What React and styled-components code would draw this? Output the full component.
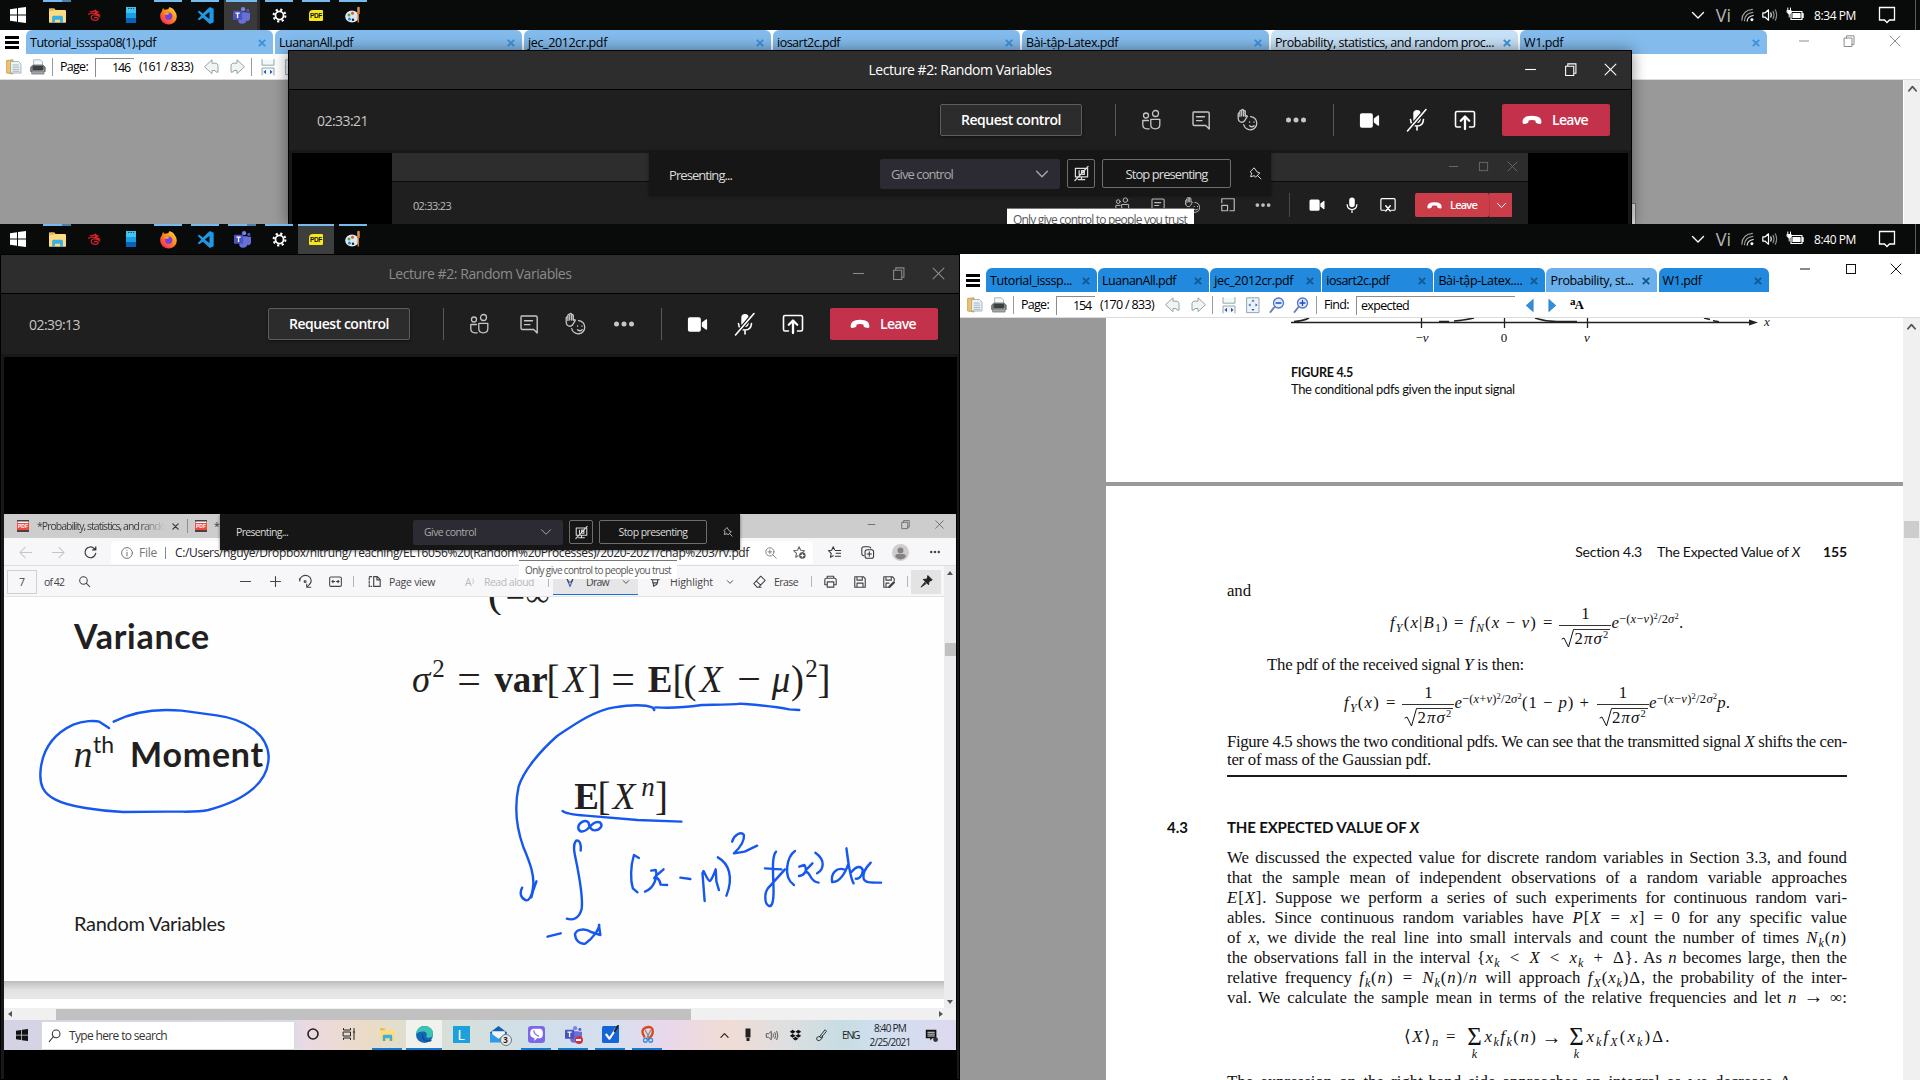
import React, { useLayoutEffect, useRef } from "react";
import styled, { createGlobalStyle, css } from "styled-components";

const ui = '"Open Sans", "Noto Sans", sans-serif';
const serif = '"Liberation Serif", "DejaVu Serif", serif';
const humanist = 'Lato, "Open Sans", sans-serif';

const Global = createGlobalStyle`
  html, body { margin: 0; padding: 0; background: #000; }
  * { box-sizing: border-box; }
`;

/* ---------- text that is spaced to a known width ---------- */

const Tracked = styled.span`
  display: inline-block;
  flex: none;
  white-space: nowrap;
`;

function Fit({ w, words, children, ...rest }) {
  const ref = useRef(null);
  useLayoutEffect(() => {
    const el = ref.current;
    const text = el.textContent;
    const prop = words ? "wordSpacing" : "letterSpacing";
    const n = words ? text.split(" ").length - 1 : text.length;
    el.style[prop] = "0px";
    el.style[prop] = (w - el.getBoundingClientRect().width) / n + "px";
  }, [w, words]);
  return (
    <Tracked ref={ref} {...rest}>
      {children}
    </Tracked>
  );
}

/* ---------- shared layout ---------- */

const Screen = styled.main`
  width: 1920px;
  height: 1080px;
  overflow: hidden;
  display: flex;
  flex-direction: column;
  background: #000;
  font-family: ${ui};
`;

const Desktop = styled.section`
  position: relative;
  flex: none;
  height: ${(p) => p.$h}px;
  display: flex;
  flex-direction: column;
  overflow: hidden;
`;

const Item = styled.div`
  flex: none;
  display: flex;
  align-items: center;
  justify-content: ${(p) => (p.$left ? "flex-start" : "center")};
  margin-left: ${(p) => p.$ml || 0}px;
  width: ${(p) => (p.$w ? p.$w + "px" : "auto")};
  padding-top: ${(p) => p.$pt || 0}px;
  white-space: nowrap;
`;

const Svg = styled.svg`
  display: block;
  flex: none;
  fill: none;
  stroke: currentColor;
  stroke-width: ${(p) => p.$sw || 1.2};
  stroke-linecap: round;
  stroke-linejoin: round;
  overflow: visible;
`;

function Glyph({ s = 16, vb = 16, sw, children, ...rest }) {
  return (
    <Svg width={s} height={s} viewBox={`0 0 ${vb} ${vb}`} $sw={sw} {...rest}>
      {children}
    </Svg>
  );
}

/* ---------- dark taskbar ---------- */

const Taskbar = styled.header`
  flex: none;
  height: 30px;
  display: flex;
  align-items: stretch;
  background: #090a0a;
  color: #fff;
`;

const TaskButton = styled.div`
  width: 36px;
  margin-right: 1px;
  display: flex;
  flex-direction: column;
  align-items: center;
  background: ${(p) => (p.$on ? (p.$split ? "#3a3a3a" : "#3d3f3f") : "transparent")};
  border-right: ${(p) => (p.$on && p.$split ? "3px solid #2a2a2a" : "0")};
  padding-left: ${(p) => (p.$on && p.$split ? "2px" : "0")};
`;

const TaskMark = styled.div`
  align-self: ${(p) => (p.$wide ? "stretch" : "center")};
  width: ${(p) => (p.$wide ? "auto" : "28px")};
  height: 2px;
  background: ${(p) =>
    !p.$run ? "transparent" : p.$multi ? "linear-gradient(90deg,#76b9ed 19px,#4f7fa8 19px)" : "#76b9ed"};
`;

const TaskIcon = styled.div`
  flex: 1;
  display: flex;
  align-items: center;
  padding-bottom: 2px;
`;

const StartSlot = styled.div`
  width: 39px;
  padding-left: 10px;
  display: flex;
  align-items: center;
`;

const Tray = styled.div`
  margin-left: auto;
  display: flex;
  align-items: center;
  font-size: 12px;
`;

const PeekLine = styled.div`
  width: 1px;
  height: 30px;
  margin: 0 4px 0 20px;
  background: #5a5a5a;
`;

const ViMark = styled.span`
  font-size: 18px;
  line-height: 20px;
  color: #b4b4b4;
`;

const WinLogo = ({ c = "#fff", s = 16 }) => (
  <Glyph s={s}>
    <path d="M0 2.3 7 1.3V7.5H0zM8 1.1 16 0v7.5H8zM0 8.5h7v6.2L0 13.7zM8 8.5h8V16l-8-1.1z" fill={c} stroke="none" />
  </Glyph>
);
const FolderIcon = ({ s = 17 }) => (
  <Glyph s={s}>
    <path d="M0 2.2q0-.9.9-.9h4l1.3 1.6H15q1 0 1 1V14q0 .8-1 .8H1q-1 0-1-.8z" fill="#fbdc82" stroke="none" />
    <path d="M0 1.5h5v2H0z" fill="#eab54a" stroke="none" />
    <path d="M3 15V9.6q0-1.3 1.3-1.3h7.4Q13 8.300 13 9.600V15h-2.600v-3H5.600v3z" fill="#39afe2" stroke="none" />
  </Glyph>
);
const DragonIcon = () => (
  <Glyph s={13} sw={1.5} color="#d8232a">
    <path d="M2.500 3q3.500 1.500 6.500-1.500.5 1.500 4 2.500M.5 6.500Q6 3.500 14.500 7.500M12 8Q5 6 4 9.500q-.5 4.500 4 4.500t4.500-2q0-1.800-2.500-1.800T7.500 11.500M12.500 8l2 2" />
    <path d="M9 2.500l2.500 2.500L9.500 6z" fill="#d8232a" />
  </Glyph>
);
const PhoneIcon = () => (
  <Glyph s={16}>
    <path d="M3 0h10v6H3z" fill="#42c3f2" stroke="none" />
    <path d="M3 6h10v5H3z" fill="#189fe2" stroke="none" />
    <path d="M3 11h10v5H3z" fill="#0a61b8" stroke="none" />
    <path d="M5.500 1.500h.5M8 1.500h.5M10.500 1.500h.3" stroke="#0b4a85" strokeWidth="1" />
  </Glyph>
);
const FirefoxIcon = () => (
  <Glyph s={17}>
    <defs>
      <linearGradient id="ff" x1="1" y1="0" x2="0.2" y2="1">
        <stop offset="0" stopColor="#ffe23c" />
        <stop offset=".5" stopColor="#ff8a1e" />
        <stop offset="1" stopColor="#f5235d" />
      </linearGradient>
    </defs>
    <path d="M2 3.500 2.800 1l1.700 1.800Q6 2 7.500 2.300L9 0q4 1.500 5 4 2 2.500 1.800 5.500A7.800 7.300 0 0 1 .2 9Q0 6 2 3.500z" fill="url(#ff)" stroke="none" />
    <circle cx="8.200" cy="8.600" r="3.400" fill="#7a3fd6" stroke="none" />
    <path d="M4 6.500q2-1.800 4.800-.6-.6 1.400-2.300 1.400z" fill="#ffb02e" stroke="none" />
  </Glyph>
);
const CodeIcon = () => (
  <Glyph s={17}>
    <path d="M12 0 5.500 6 2.200 3.600.6 4.400 4 8 .6 11.600l1.600.8L5.500 10 12 16l3.700-1.700V1.700zM11.700 4.800v6.400L7.400 8z" fill="#2196e3" fillRule="evenodd" stroke="none" />
  </Glyph>
);
const TeamsIcon = ({ s = 17 }) => (
  <Glyph s={s}>
    <circle cx="9.500" cy="2" r="2" fill="#7b83eb" stroke="none" />
    <circle cx="14" cy="3.200" r="1.400" fill="#5059c9" stroke="none" />
    <path d="M12 5.500h4V11q-.5 2.500-3 2.500zM6 5h7v6.500q-.6 4.300-4.500 4.300T5 12z" fill="#6870d8" stroke="none" />
    <rect x="0" y="3.500" width="8.600" height="8.600" rx=".8" fill="#4b53bc" stroke="none" />
    <path d="M2.300 5.800h4M4.300 5.800v4.500" stroke="#fff" strokeWidth="1.200" strokeLinecap="butt" />
  </Glyph>
);
const GearIcon = () => (
  <Glyph s={15} color="#fff">
    <circle cx="8" cy="8" r="4.300" strokeWidth="1.900" />
    <circle cx="8" cy="8" r="6.300" strokeWidth="2.200" strokeDasharray="2.300 2.650" strokeLinecap="butt" />
  </Glyph>
);
const PdfBox = styled.span`
  width: 14px;
  height: 11px;
  border-radius: 4px 1px 1px 1px;
  background: #f6e61a;
  color: #111;
  font: bold 6.5px/11px "Liberation Sans", Arial, sans-serif;
  text-align: center;
  letter-spacing: -0.3px;
`;
const PaintIcon = () => (
  <Glyph s={16}>
    <ellipse cx="7" cy="9.500" rx="6.800" ry="6" fill="#d7e8f3" stroke="none" />
    <circle cx="4" cy="8" r="1.500" fill="#58a83b" stroke="none" />
    <circle cx="7.500" cy="6.300" r="1.500" fill="#e5532f" stroke="none" />
    <circle cx="4.500" cy="12" r="1.500" fill="#2c86d8" stroke="none" />
    <circle cx="8" cy="12.800" r="1.200" fill="#1b1b1b" stroke="none" />
    <path d="M13.500 1v5" stroke="#dd8a4e" strokeWidth="2.600" />
    <path d="M13.300 6v9" stroke="#c8762e" strokeWidth="1.500" />
  </Glyph>
);
const WifiIcon = () => (
  <Glyph s={14} sw={1.300} color="#9c9c9c">
    <path d="M1 14Q1 3 13 1.500M4 14.500Q4.500 6 13.500 5" />
    <path d="M7 15q.5-5.500 7-6.500" stroke="#ddd" />
    <circle cx="12.500" cy="13.500" r="1.700" fill="#fff" stroke="none" />
  </Glyph>
);
const SoundIcon = ({ s = 16, c = "#fff" }) => (
  <Glyph s={s} sw={1.200} color={c}>
    <path d="M.8 5.800h2.400L6.500 2.800v10.400L3.200 10.200H.8z" />
    <path d="M8.800 6q1 2 0 4" />
    <path d="M11 4.300q2 3.700 0 7.400M13.300 2.800q2.700 5.200 0 10.400" stroke={c === "#fff" ? "#8a8a8a" : c} />
  </Glyph>
);
const BatteryIcon = () => (
  <Glyph s={16} color="#fff">
    <rect x="4" y="4.500" width="11" height="8" strokeWidth="1.200" />
    <path d="M6 6.500h7v4H6zM15.500 6.500h.6v4h-.6z" fill="#fff" />
    <path d="M.8 1v2.500M3.500 1v2.500M.3 3.500h3.800v2q-1 1.600-1.900 1.600T.3 5.500zM2.200 7v3" fill="#fff" strokeWidth="1" />
  </Glyph>
);

const TASKS = [
  { icon: <FolderIcon />, run: true, multi: true },
  { icon: <DragonIcon /> },
  { icon: <PhoneIcon /> },
  { icon: <FirefoxIcon />, run: true },
  { icon: <CodeIcon />, run: true },
  { icon: <TeamsIcon />, run: true, multi: true },
  { icon: <GearIcon />, run: true },
  { icon: <PdfBox>PDF</PdfBox>, run: true },
  { icon: <PaintIcon />, run: true },
];

function DarkTaskbar({ time, active }) {
  return (
    <Taskbar>
      <StartSlot>
        <WinLogo />
      </StartSlot>
      {TASKS.map((t, i) => (
        <TaskButton key={i} $on={i === active} $split={t.multi}>
          <TaskMark $run={t.run} $multi={t.multi && i !== active} $wide={i === active} />
          <TaskIcon>{t.icon}</TaskIcon>
        </TaskButton>
      ))}
      <Tray>
        <Item>
          <Glyph s={12} vb={12} sw={1.400}>
            <path d="M.5 3.500 6 9l5.500-5.500" />
          </Glyph>
        </Item>
        <Item $ml={12} $w={15}>
          <ViMark>Vi</ViMark>
        </Item>
        <Item $ml={10}>
          <WifiIcon />
        </Item>
        <Item $ml={7}>
          <SoundIcon />
        </Item>
        <Item $ml={9}>
          <BatteryIcon />
        </Item>
        <Item $ml={11} $w={45} $left>
          <Fit w={42}>{time}</Fit>
        </Item>
        <Item $ml={20}>
          <Glyph s={16} sw={1.300}>
            <path d="M.5.5h15v12.500h-5L8 15.500 5.500 13h-5z" strokeLinejoin="miter" />
          </Glyph>
        </Item>
        <PeekLine />
      </Tray>
    </Taskbar>
  );
}

/* ---------- PDF reader chrome ---------- */

const Reader = styled.div`
  flex: 1;
  min-width: 0;
  display: flex;
  flex-direction: column;
  background: #fff;
  color: #000;
`;

const TabStrip = styled.div`
  flex: none;
  display: flex;
  align-items: flex-end;
  height: ${(p) => p.$h}px;
  padding-left: ${(p) => p.$pl}px;
`;

const Burger = styled.div`
  width: 14px;
  height: 24px;
  margin-right: ${(p) => p.$mr}px;
  display: flex;
  flex-direction: column;
  justify-content: center;
  gap: 2px;
  i {
    height: 3px;
    background: #000;
  }
`;

const Tab = styled.div`
  flex: none;
  width: ${(p) => p.$w}px;
  height: 24px;
  margin-right: ${(p) => p.$gap}px;
  padding: 1px 7px 0 4px;
  display: flex;
  align-items: center;
  justify-content: space-between;
  border-radius: 6px 6px 0 0;
  background: ${(p) => p.$bg};
  font-size: 12.5px;
  line-height: 16px;
`;

const TabClose = styled.svg`
  width: 8px;
  height: 8px;
  stroke: ${(p) => p.$c};
  stroke-width: 1.9;
  fill: none;
`;

const CaptionButtons = styled.div`
  margin-left: auto;
  align-self: flex-start;
  display: flex;
  color: ${(p) => p.$c};
  margin-top: ${(p) => p.$mt}px;
  margin-right: ${(p) => p.$mr}px;
`;

const CapCell = styled.div`
  width: ${(p) => p.$w || 45}px;
  display: flex;
  align-items: center;
  justify-content: center;
`;

function Caps({ c, mt, mr, w, s = 12, max, sw = 1 }) {
  return (
    <CaptionButtons $c={c} $mt={mt} $mr={mr}>
      <CapCell $w={w}>
        <Glyph s={s} vb={12} sw={sw}>
          <path d="M1 6h10" strokeLinecap="butt" />
        </Glyph>
      </CapCell>
      <CapCell $w={w}>
        <Glyph s={s} vb={12} sw={sw}>
          {max ? (
            <rect x="1.500" y="1.500" width="9" height="9" strokeLinejoin="miter" />
          ) : (
            <path d="M1.500 3h7.500v8.500H1.500zM3.500 3V.8H11v8.700H9" strokeLinejoin="miter" />
          )}
        </Glyph>
      </CapCell>
      <CapCell $w={w}>
        <Glyph s={s} vb={12} sw={sw}>
          <path d="M1 1l10 10M11 1 1 11" />
        </Glyph>
      </CapCell>
    </CaptionButtons>
  );
}

const ToolRow = styled.div`
  flex: none;
  height: 26px;
  padding-top: 1px;
  display: flex;
  align-items: center;
  border-bottom: 1px solid #dcdcdc;
  font-size: 12.5px;
  line-height: 16px;
`;

const Sep = styled.div`
  flex: none;
  width: 1px;
  height: ${(p) => p.$h || 18}px;
  margin-left: ${(p) => p.$ml}px;
  background: ${(p) => p.$c || "#9a9a9a"};
`;

const Field = styled.div`
  flex: none;
  width: ${(p) => p.$w}px;
  height: 19px;
  margin-left: ${(p) => p.$ml}px;
  padding: 0 4px;
  display: flex;
  align-items: center;
  justify-content: ${(p) => (p.$right ? "flex-end" : "flex-start")};
  border-left: 1px solid #8c8c8c;
  border-top: 1px solid #8c8c8c;
`;

const OpenIcon = () => (
  <Glyph s={16} sw={0.800}>
    <path d="M1 1.500 7 .8V15l-6-1z" fill="#efc36b" stroke="#c59232" />
    <path d="M5 2.500h7.500L15 5v9H5z" fill="#eef4f6" stroke="#93a7ae" />
    <path d="M7 6h5.500M7 8.200h6M7 10.400h6M7 12.300h6" stroke="#8fa3ab" />
  </Glyph>
);
const PrintIcon = () => (
  <Glyph s={16} sw={0.800}>
    <path d="M4 .8h6.500L12.500 3v4H4z" fill="#f4f7f8" stroke="#9aa" />
    <path d="M.8 8 3 6h10l2.200 2v4.500H.8z" fill="#777d80" stroke="#666" />
    <path d="M3.500 7.500h9v3h-9z" fill="#3b4042" stroke="#333" />
    <path d="M2 12h12v3H2z" fill="#9fa6a9" stroke="#777" />
    <circle cx="13.500" cy="11.500" r=".7" fill="#8bd14b" stroke="none" />
  </Glyph>
);
const ArrowIcon = ({ flip }) => (
  <Glyph s={16} sw={0.900}>
    <path
      d="M.8 7.500 8 .8v3.400h4.500l1.500 2v7l-2-.2-1-1.500H8v2.800z"
      transform={flip ? "translate(16 0) scale(-1 1)" : undefined}
      fill="#f0f5f3"
      stroke="#8a9a9a"
    />
  </Glyph>
);
const ContIcon = () => (
  <Glyph s={16} sw={0.900}>
    <path d="M2 .5v5.700h12V.5" fill="#f2f7f8" stroke="#8a9fa2" />
    <path d="M2 16V9h12v7" fill="#f2f7f8" stroke="#8a9fa2" />
    <path d="M6 10.800 3.500 13 6 15zM10 10.800 12.500 13 10 15z" fill="#2a50b8" stroke="none" />
  </Glyph>
);
const PageFitIcon = () => (
  <Glyph s={16} sw={0.900}>
    <rect x="2" y=".8" width="12" height="14.800" fill="#eaf4fa" stroke="#8a9fa2" />
    <path d="M8 2.500 6.500 4.500h3zM8 14 6.500 12h3zM3.500 8 5.500 6.500v3zM12.500 8 10.500 6.500v3z" fill="#2a50b8" stroke="none" />
  </Glyph>
);
const LensIcon = ({ plus }) => (
  <Glyph s={16} sw={1.300}>
    <circle cx="9.500" cy="6" r="5" fill="#e2edff" stroke="#4b73d1" />
    <path d={plus ? "M7 6h5M9.500 3.500v5" : "M7 6h5"} stroke="#2448b5" />
    <path d="m5.500 10-4 5" stroke="#6a7fae" strokeWidth="2" />
  </Glyph>
);
const NextIcon = ({ flip }) => (
  <Glyph s={13} vb={13}>
    <path d="M3 .5 9.800 6.500 3 12.500z" fill="#2f8fe0" stroke="#1a6fc0" strokeWidth=".6" transform={flip ? "translate(13 0) scale(-1 1)" : undefined} />
  </Glyph>
);
const MatchCase = styled.span`
  font: bold 13px/14px ${serif};
  letter-spacing: -1px;
  sup {
    font-size: 11px;
    vertical-align: 4px;
    line-height: 0;
  }
`;

function Tabs({ items, w, gap, bg, on, close, active }) {
  return items.map(([name, tw], i) => (
    <Tab key={i} $w={w} $gap={gap} $bg={i === active ? on : bg}>
      <Fit w={tw}>{name}</Fit>
      <TabClose $c={close} viewBox="0 0 8 8">
        <path d="M.8.8l6.400 6.400M7.200.8.8 7.200" />
      </TabClose>
    </Tab>
  ));
}

function ReaderTools({ page, count, pl, full }) {
  return (
    <ToolRow>
      <Item $ml={pl}>
        <OpenIcon />
      </Item>
      <Item $ml={8}>
        <PrintIcon />
      </Item>
      <Sep $ml={6} />
      <Item $ml={7} $w={35} $left>
        <Fit w={28}>Page:</Fit>
      </Item>
      <Field $w={39} $ml={0} $right>
        <Fit w={18}>{page}</Fit>
      </Field>
      <Item $ml={5} $w={60} $left>
        <Fit w={54}>{count}</Fit>
      </Item>
      <Item $ml={5}>
        <ArrowIcon />
      </Item>
      <Item $ml={9}>
        <ArrowIcon flip />
      </Item>
      <Sep $ml={6} />
      <Item $ml={8}>
        <ContIcon />
      </Item>
      <Item $ml={8}>
        <PageFitIcon />
      </Item>
      {full && (
        <>
          <Item $ml={8}>
            <LensIcon />
          </Item>
          <Item $ml={8}>
            <LensIcon plus />
          </Item>
          <Sep $ml={7} />
          <Item $ml={7} $w={32} $left>
            <Fit w={25}>Find:</Fit>
          </Item>
          <Field $w={159} $ml={0}>
            <Fit w={48}>expected</Fit>
          </Field>
          <Item $ml={8}>
            <NextIcon flip />
          </Item>
          <Item $ml={10}>
            <NextIcon />
          </Item>
          <Item $ml={11}>
            <MatchCase>
              <sup>a</sup>A
            </MatchCase>
          </Item>
        </>
      )}
    </ToolRow>
  );
}

const Viewport = styled.div`
  flex: 1;
  min-height: 0;
  display: flex;
  background: #999;
`;

const ScrollTrack = styled.div`
  margin-left: auto;
  flex: none;
  width: 17px;
  display: flex;
  flex-direction: column;
  align-items: center;
  background: #f0f0f0;
  border-left: ${(p) => (p.$edge ? "1px solid #fff" : "0")};
  padding-top: 4px;
  color: #555;
`;

const Thumb = styled.div`
  width: 15px;
  height: 17px;
  margin-top: ${(p) => p.$mt}px;
  background: #cdcdcd;
`;

/* ---------- meeting window ---------- */

const MeetingWindow = styled.section`
  ${(p) =>
    p.$float
      ? css`
          position: absolute;
          left: 288px;
          top: 50px;
          width: 1344px;
          height: 174px;
          box-shadow: 0 0 14px rgba(0, 0, 0, 0.45);
          border: 1px solid #000;
          border-bottom: 0;
        `
      : css`
          flex: none;
          width: 960px;
          border: 1px solid #000;
        `}
  display: flex;
  flex-direction: column;
  background: #181818;
  overflow: hidden;
`;

const MeetingTitle = styled.div`
  flex: none;
  height: 39px;
  display: grid;
  grid-template-columns: 1fr auto 1fr;
  align-items: center;
  background: #2d2d2d;
  border-bottom: 1px solid #000;
  color: ${(p) => (p.$dim ? "#8b8b8b" : "#fff")};
  font-size: 14px;
  line-height: 20px;
`;

const MeetingBar = styled.div`
  flex: none;
  height: 60px;
  display: flex;
  align-items: center;
  padding: 0 21px 0 28px;
  background: #1f1f1f;
  color: #c8c6c4;
  font-size: 14px;
`;

const RequestButton = styled.div`
  width: 142px;
  height: 32px;
  margin-left: auto;
  display: flex;
  align-items: center;
  justify-content: center;
  border: 1px solid #605e5c;
  border-radius: 2px;
  background: #2d2c2c;
  color: #fff;
  font-weight: 600;
  font-size: 14px;
  line-height: 18px;
  box-shadow: 0 1px 3px rgba(0, 0, 0, 0.5);
`;

const LeaveButton = styled.div`
  display: flex;
  align-items: center;
  gap: ${(p) => (p.$small ? 8 : 10)}px;
  width: ${(p) => (p.$small ? 74 : 108)}px;
  height: ${(p) => (p.$small ? 24 : 32)}px;
  margin-left: ${(p) => (p.$small ? 18 : 25)}px;
  padding-left: ${(p) => (p.$small ? 12 : 20)}px;
  border-radius: 2px;
  background: ${(p) => (p.$small ? "#cb3d49" : "#c4314b")};
  color: #fff;
  font-weight: 600;
  font-size: ${(p) => (p.$small ? 11 : 14)}px;
  line-height: 18px;
`;

const LeaveMore = styled.div`
  width: 23px;
  height: 24px;
  display: flex;
  align-items: center;
  justify-content: center;
  background: #cb3d49;
  border-left: 1px solid #b93542;
  color: #fff;
`;

const PeopleIcon = ({ s = 24 }) => (
  <Glyph s={s} vb={24} sw={1.300}>
    <circle cx="7" cy="7.500" r="2.500" />
    <circle cx="16.500" cy="5.500" r="3" />
    <path d="M11.800 11.300h9v5.500q0 4-4.500 4t-4.500-4zM9.500 12.500H3.800V17q.2 3.700 4.200 3.800h2.200" />
  </Glyph>
);
const ChatIcon = ({ s = 24 }) => (
  <Glyph s={s} vb={24} sw={1.400}>
    <path d="M4.500 4h14.300q1.400 0 1.400 1.400V21l-3.500-3.500H5.400Q4 17.500 4 16V5.400Q4 4 4.500 4zM7.500 8.800h8M7.500 12.600h5.500" />
  </Glyph>
);
const HandIcon = ({ s = 24 }) => (
  <Glyph s={s} vb={24} sw={1.300}>
    <path d="M2.200 10.500V5.700q.8-1.500 1.700 0V3.100q.9-1.500 1.800 0V2.200q1-1.400 1.900 0v1q.9-1.100 1.700 0V8.300q1.500-1.500 2 0L8.800 12.500Q7 15 4.500 14 2.200 13 2.200 10.500zM3.900 5.500v3M5.700 3.500v4.500M7.600 3v5" />
    <path d="M14.500 8.600a6.600 6.600 0 1 1-6.800 8M13.500 17.800q2.300 2 4.600 0M13.600 13.800v.4M18 13.800v.4" />
  </Glyph>
);
const DotsIcon = ({ s = 24 }) => (
  <Glyph s={s} vb={24}>
    <g fill="currentColor" stroke="none">
      <circle cx="4.500" cy="12" r="2.500" />
      <circle cx="12" cy="12" r="2.500" />
      <circle cx="19.500" cy="12" r="2.500" />
    </g>
  </Glyph>
);
const CameraIcon = ({ s = 24 }) => (
  <Glyph s={s} vb={24} color="#fff">
    <path d="M4 4.500h9.500q2 0 2 2v11q0 2-2 2H4q-2 0-2-2v-11q0-2 2-2zM16.500 10 21 6.500q1-.3 1 .7v9.600q0 1-1 .7L16.500 14z" fill="#fff" stroke="none" />
  </Glyph>
);
const MicIcon = ({ s = 24, off }) => (
  <Glyph s={s} vb={24} sw={1.600} color="#fff">
    <rect x="8.300" y="2" width="7.400" height="13" rx="3.700" fill="currentColor" stroke="none" />
    <path d="M5.500 11.500q.5 6.500 6.500 6.500t6.500-6.500M12 18v4" />
    {off && (
      <>
        <path d="M20.500 2 3 22.500" stroke="#1f1f1f" strokeWidth="4" />
        <path d="M21 1.500 2.500 23" />
      </>
    )}
  </Glyph>
);
const ShareIcon = ({ s = 24, stop }) => (
  <Glyph s={s} vb={24} sw={1.600} color="#fff">
    <path d="M7.500 19H4q-1.500 0-1.500-1.500V5Q2.500 3.500 4 3.500h16q1.500 0 1.500 1.500v12.500Q21.500 19 20 19h-3.500" />
    {stop ? <path d="m9 13 6 7M15 13l-6 7" strokeWidth="2" /> : <path d="M12 21V9M7.800 12.700 12 8.500l4.200 4.200" strokeWidth="2.300" />}
  </Glyph>
);
const PhoneDown = ({ s = 20 }) => (
  <Glyph s={s} vb={20}>
    <path d="M.5 12.300Q.2 5.800 10 5.700t9.500 6.600q-.2 2-1.800 1.600l-3-.6q-1-.2-1.100-1.200l-.2-1.700q-3.400-1-6.800 0l-.2 1.700q-.1 1-1.100 1.200l-3 .6q-1.600.4-1.800-1.600z" fill="currentColor" stroke="none" />
  </Glyph>
);
const PopIcon = ({ s = 18 }) => (
  <Glyph s={s} vb={18} sw={1.300}>
    <path d="M11 15.500H16V2H2v4.500M2 9.500h6.500v6H2z" />
  </Glyph>
);
const ChevronDown = ({ s = 10, sw = 1.100 }) => (
  <Glyph s={s} vb={10} sw={sw}>
    <path d="m.5 2.700 4.500 4.600 4.500-4.600" />
  </Glyph>
);

function MeetingHead({ time, dim }) {
  return (
    <>
      <MeetingTitle $dim={dim}>
        <i />
        <Fit w={183}>Lecture #2: Random Variables</Fit>
        <Caps c="inherit" mt={12} mr={0.5} w={40} s={13} />
      </MeetingTitle>
      <MeetingBar>
        <Fit w={51}>{time}</Fit>
        <RequestButton>
          <Fit w={100}>Request control</Fit>
        </RequestButton>
        <Sep $ml={33} $h={32} $c="#5a5a5a" />
        <Item $ml={23}>
          <PeopleIcon />
        </Item>
        <Item $ml={26}>
          <ChatIcon />
        </Item>
        <Item $ml={23}>
          <HandIcon />
        </Item>
        <Item $ml={24}>
          <DotsIcon />
        </Item>
        <Sep $ml={25} $h={32} $c="#5a5a5a" />
        <Item $ml={24}>
          <CameraIcon s={23} />
        </Item>
        <Item $ml={24}>
          <MicIcon off />
        </Item>
        <Item $ml={24}>
          <ShareIcon />
        </Item>
        <LeaveButton>
          <PhoneDown />
          <Fit w={36}>Leave</Fit>
        </LeaveButton>
      </MeetingBar>
    </>
  );
}

/* ---------- presenting strip ---------- */

const Strip = styled.div`
  position: absolute;
  left: ${(p) => p.$x}px;
  top: ${(p) => p.$y}px;
  width: ${(p) => p.$w}px;
  height: ${(p) => p.$h}px;
  padding-left: ${(p) => p.$pl}px;
  padding-top: ${(p) => p.$pt}px;
  display: flex;
  align-items: center;
  background: #161616;
  box-shadow: 0 1px 3px rgba(0, 0, 0, 0.5);
  color: #dcdcdc;
  font-size: ${(p) => p.$fs}px;
  line-height: 16px;
`;

const StripBox = styled.div`
  flex: none;
  display: flex;
  align-items: center;
  justify-content: ${(p) => (p.$drop ? "space-between" : "center")};
  width: ${(p) => p.$w}px;
  height: ${(p) => p.$h}px;
  margin-left: ${(p) => p.$ml}px;
  padding: ${(p) => (p.$drop ? "0 12px 0 11px" : "0")};
  border-radius: 2px;
  ${(p) =>
    p.$drop
      ? css`
          background: #2c2a32;
          color: #a9a8ab;
        `
      : css`
          border: 1.5px solid #6e6e6e;
        `}
`;

const Tip = styled.div`
  position: absolute;
  left: ${(p) => p.$x}px;
  top: ${(p) => p.$y}px;
  width: ${(p) => p.$w}px;
  height: ${(p) => p.$h}px;
  padding-left: 6px;
  border-top: 1px solid #777;
  background: #fff;
  color: #575757;
  font-size: ${(p) => p.$fs}px;
  line-height: ${(p) => p.$lh}px;
`;

const NoScreenIcon = ({ s }) => (
  <Glyph s={s} vb={16} sw={1.300}>
    <path d="M1.500 2.500h13v9h-13zM4.500 14.500h7M8 11.500v3M5.500 5v4M8 7.500V5h3v4H8.500M1 15.500 15 .5" />
  </Glyph>
);
const PinIcon = ({ s }) => (
  <Glyph s={s} vb={12} sw={0.900}>
    <path d="M4.500 1 1 4.500l1.500 1-1 3.500 3.500-1L6 9.500l4-4-2.200-.8zM7.800 7.800l3.200 3.200" />
  </Glyph>
);

/* ---------- nested shared window on the first desktop ---------- */

const SharedRow = styled.div`
  flex: 1;
  display: flex;
  margin: 3px 3px 0;
  background: #000;
  padding: 0 100px 0 100px;
`;

const Inner = styled.div`
  flex: 1;
  display: flex;
  flex-direction: column;
  background: #1f1f1f;
`;

const InnerTitle = styled.div`
  height: 29px;
  display: flex;
  background: #2d2d2d;
  border-bottom: 1px solid #0c0c0c;
`;

const InnerBar = styled.div`
  height: 44px;
  display: flex;
  align-items: center;
  padding: 2px 16px 0 21px;
  color: #bdbdbd;
  font-size: 11px;
`;

const InnerTools = styled.div`
  margin-left: auto;
  display: flex;
  align-items: center;
  gap: 17.6px;
`;

const Behind = styled.div`
  position: absolute;
  left: 1632px;
  top: 203px;
  width: 4px;
  height: 21px;
  background: #e4e4e4;
  border-right: 1px solid #777;
  border-top: 1px solid #777;
`;

const TOP_TABS = [
  ["Tutorial_issspa08(1).pdf", 126],
  ["LuananAll.pdf", 74],
  ["jec_2012cr.pdf", 79],
  ["iosart2c.pdf", 63],
  ["Bài-tập-Latex.pdf", 92],
  ["Probability, statistics, and random proc...", 219],
  ["W1.pdf", 39],
];

function FirstDesktop() {
  return (
    <Desktop $h={224}>
      <DarkTaskbar time="8:34 PM" active={5} />
      <Reader>
        <TabStrip $h={24} $pl={5}>
          <Burger $mr={7}>
            <i />
            <i />
            <i />
          </Burger>
          <Tabs items={TOP_TABS} w={247} gap={2} bg="#83bbec" on="#c7e1f7" close="#3a92dd" active={5} />
          <Caps c="#8c8c8c" mt={5} mr={2.5} w={45.5} />
        </TabStrip>
        <ReaderTools page="146" count="(161 / 833)" pl={6} />
        <Viewport>
          <ScrollTrack $edge>
            <ScrollArrow />
          </ScrollTrack>
        </Viewport>
      </Reader>
      <Behind />
      <MeetingWindow $float>
        <MeetingHead time="02:33:21" />
        <SharedRow>
          <Inner>
            <InnerTitle>
              <Caps c="#6a6a6a" mt={8} mr={0.5} w={29.5} s={11} max />
            </InnerTitle>
            <InnerBar>
              <Fit w={38}>02:33:23</Fit>
              <InnerTools>
                <PeopleIcon s={18} />
                <ChatIcon s={18} />
                <HandIcon s={18} />
                <PopIcon s={16} />
                <DotsIcon s={18} />
                <Sep $ml={0} $h={24} $c="#4a4a4a" />
                <CameraIcon s={18} />
                <MicIcon s={18} />
                <ShareIcon s={18} stop />
              </InnerTools>
              <LeaveButton $small>
                <PhoneDown s={15} />
                <Fit w={27}>Leave</Fit>
              </LeaveButton>
              <LeaveMore>
                <ChevronDown s={9} />
              </LeaveMore>
            </InnerBar>
          </Inner>
        </SharedRow>
      </MeetingWindow>
      <Strip $x={649} $y={151} $w={622} $h={44} $pl={20} $pt={1} $fs={13}>
        <Item $w={211} $left $pt={2}>
          <Fit w={63}>Presenting...</Fit>
        </Item>
        <StripBox $drop $w={180} $h={30} $ml={0}>
          <Fit w={62}>Give control</Fit>
          <ChevronDown s={12} />
        </StripBox>
        <StripBox $w={28} $h={29} $ml={7}>
          <NoScreenIcon s={15} />
        </StripBox>
        <StripBox $w={129} $h={29} $ml={7}>
          <Fit w={82}>Stop presenting</Fit>
        </StripBox>
        <Item $ml={18}>
          <PinIcon s={13} />
        </Item>
      </Strip>
      <Tip $x={1007} $y={208} $w={187} $h={20} $fs={12} $lh={22}>
        <Fit w={174}>Only give control to people you trust</Fit>
      </Tip>
    </Desktop>
  );
}

function ScrollArrow() {
  return (
    <Glyph s={9} vb={10} sw={2}>
      <path d="M1 7.500 5 3l4 4.500" />
    </Glyph>
  );
}

/* ---------- browser shared in the second desktop ---------- */

const Split = styled.div`
  flex: 1;
  min-height: 0;
  display: flex;
`;

const Stage = styled.div`
  flex: 1;
  margin: 3px 2px 0 3px;
  padding-top: 157px;
  background: #000;
`;

const Browser = styled.div`
  position: relative;
  width: 952px;
  height: 536px;
  display: flex;
  flex-direction: column;
  background: #f7f6f9;
  color: #444;
  font-size: 10.5px;
`;

const BrowserTabs = styled.div`
  flex: none;
  height: 24px;
  display: flex;
  align-items: center;
  background: #cdcdcd;
  color: #3c3c3c;
`;

const FadeText = styled.div`
  width: 128px;
  margin-left: 8px;
  overflow: hidden;
  white-space: nowrap;
  mask-image: linear-gradient(90deg, #000 80%, transparent);
`;

const PdfDoc = styled.span`
  flex: none;
  width: 12px;
  height: 7px;
  margin-left: ${(p) => p.$ml}px;
  background: #f0483c;
  color: #fff;
  font: bold 5px/7px "Liberation Sans", Arial, sans-serif;
  text-align: center;
  box-shadow: 0 -2px 0 -0.5px #fff, 0 -3px 0 0 #444, 0 2px 0 0 #444;
`;

const AddressRow = styled.div`
  flex: none;
  height: 28px;
  padding-top: 1px;
  display: flex;
  align-items: center;
  border-bottom: 1px solid #dddce0;
`;

const AddressBox = styled.div`
  width: 702px;
  height: 23px;
  margin-left: 14px;
  padding-top: 1px;
  display: flex;
  align-items: center;
  border-radius: 3px;
  background: #fff;
  color: #222;
  font-size: 12px;
`;

const Muted = styled.span`
  color: #777;
`;

const Pale = styled.span`
  color: #b9b9bb;
`;

const PdfTools = styled.div`
  flex: none;
  height: 31px;
  width: 940px;
  padding-top: 1px;
  display: flex;
  align-items: center;
  border-bottom: 1px solid #e4e4e4;
`;

const PageBox = styled.div`
  width: 30px;
  height: 24px;
  margin: 0 0 0 3px;
  display: flex;
  align-items: center;
  justify-content: center;
  border: 1px solid #d0d0d0;
`;

const DrawTool = styled.div`
  width: 85px;
  height: 24px;
  margin: 3px 0 0 4px;
  padding: 0 6px 1px 11px;
  display: flex;
  align-items: center;
  background: #e6e6e9;
  border-bottom: 1.5px solid #1a73cf;
`;

const PinBox = styled.div`
  width: 30px;
  height: 24px;
  margin-left: 3px;
  display: flex;
  align-items: center;
  justify-content: center;
  background: #e3e3e3;
`;

const Body = styled.div`
  flex: none;
  height: 442px;
  margin-top: -31px;
  display: flex;
`;

const Paper = styled.div`
  width: 940px;
  padding-top: 31px;
  display: flex;
  flex-direction: column;
`;

const Slide = styled.div`
  position: relative;
  flex: none;
  height: 384px;
  display: flex;
  flex-direction: column;
  background: #fefefe;
  color: #231f20;
  overflow: hidden;
`;

const PageShade = styled.div`
  flex: none;
  height: 18px;
  background: linear-gradient(#bcbcbc, #e2e2e2 50%, #e8e8e8);
`;

const NextSlide = styled.div`
  flex: 1;
  background: #fff;
`;

const SideScroll = styled.div`
  width: 12px;
  display: flex;
  flex-direction: column;
  align-items: center;
  background: #ececee;
  color: #666;
  padding-top: 5px;
`;

const SideThumb = styled.div`
  width: 11px;
  height: 13px;
  margin-top: 68px;
  margin-bottom: auto;
  background: #c1c1c1;
`;

const BottomScroll = styled.div`
  flex: none;
  height: 12px;
  padding: 0 13px 0 4px;
  display: flex;
  align-items: center;
  background: #f0f0f0;
  color: #555;
`;

const BottomThumb = styled.div`
  width: 635px;
  height: 11px;
  margin: 1px auto 0 44px;
  background: #c1c1c1;
`;

const Tri = styled.span`
  width: 0;
  height: 0;
  flex: none;
  border: 3px solid transparent;
  ${(p) =>
    ({
      up: "border-top:0;border-bottom:4px solid #555;",
      down: "border-bottom:0;border-top:4px solid #555;margin-bottom:4px;",
      left: "border-left:0;border-right:4px solid #555;",
      right: "border-right:0;border-left:4px solid #555;",
    })[p.$d]}
`;

const Row = styled.div`
  flex: none;
  height: ${(p) => p.$h}px;
  margin-top: ${(p) => p.$mt || 0}px;
  padding-left: ${(p) => p.$pl || 0}px;
  display: flex;
  align-items: center;
  font-family: ${(p) => (p.$sans ? humanist : serif)};
  font-size: ${(p) => p.$fs}px;
  font-weight: ${(p) => (p.$bold ? 700 : 400)};
  line-height: 1;
  white-space: nowrap;
`;

const Tok = styled.span`
  flex: none;
  width: ${(p) => p.$w}px;
  display: flex;
  align-items: center;
  justify-content: center;
  font-size: ${(p) => (p.$fs ? p.$fs + "px" : "inherit")};
  font-style: ${(p) => (p.$i ? "italic" : "normal")};
  font-weight: ${(p) => (p.$b ? 700 : "inherit")};
  padding-bottom: ${(p) => p.$up || 0}px;
  line-height: 1;
  white-space: nowrap;
`;

const ClipRow = styled.div`
  flex: none;
  height: 18px;
  margin-left: 481px;
  display: flex;
  align-items: flex-end;
  overflow: hidden;
  font: 44px/44px ${serif};
`;

const Ink = styled.svg`
  position: absolute;
  left: 0;
  top: 0;
  width: 940px;
  height: 384px;
  fill: none;
  stroke: #1658ef;
  stroke-width: 2.4;
  stroke-linecap: round;
  stroke-linejoin: round;
  path {
    vector-effect: non-scaling-stroke;
  }
`;

const LightBar = styled.div`
  flex: none;
  height: 30px;
  display: flex;
  align-items: center;
  background: linear-gradient(90deg, #d3d3e4 0, #d9dcea 30%, #ecd9e2 32%, #eadcc6 38%, #d9dfd4 45%, #cfe0ea 56%, #d6dff0 64%, #ead8ea 70%, #f0dcd4 76%, #dfdfe0 82%, #c6dde3 88%, #d0dff0 92%, #ddd9ee 100%);
  color: #222;
`;

const SearchBox = styled.div`
  width: 254px;
  height: 29px;
  margin-left: 11px;
  padding-left: 6px;
  display: flex;
  align-items: center;
  gap: 8px;
  background: #fff;
  border: 1px solid #d8d8d8;
  font-size: 12px;
  color: #333;
`;

const LightTask = styled.div`
  width: ${(p) => p.$w}px;
  height: 30px;
  margin-left: ${(p) => p.$ml || 0}px;
  display: flex;
  align-items: center;
  justify-content: center;
  background: ${(p) => (p.$on ? "rgba(255,255,255,.6)" : "transparent")};
  border-bottom: 2px solid ${(p) => (p.$run ? "#1579d0" : "transparent")};
`;

const Badge = styled.span`
  position: absolute;
  left: 10px;
  top: 8px;
  width: 12px;
  height: 12px;
  border-radius: 50%;
  border: 1px solid #777;
  background: #e7e7e7;
  font: bold 8px/10px ${ui};
  text-align: center;
`;

const StopDot = styled.span`
  position: absolute;
  left: 10px;
  top: 10px;
  width: 8px;
  height: 8px;
  padding: 3px 1.5px;
  border-radius: 50%;
  background: #d13240;
  i {
    display: block;
    height: 2px;
    background: #fff;
  }
`;

const Badged = styled.span`
  position: relative;
  display: flex;
`;

const LetterTile = styled.span`
  width: 17px;
  height: 17px;
  background: #1da1dc;
  color: #fff;
  font: 14px/17px ${humanist};
  text-align: center;
`;

const Clock = styled.div`
  width: 44px;
  margin-left: 9px;
  display: flex;
  flex-direction: column;
  align-items: center;
  font-size: 10px;
  line-height: 14px;
`;

function SlideInk() {
  return (
    <Ink viewBox="4 597 940 384">
      <g transform="translate(0 580) scale(.33333)">
        <path d="M341 425C400 395 470 385 545 392L650 406C740 418 803 465 806 530C806 605 740 660 625 690C590 698 560 694 500 695L370 696C300 693 205 680 165 658C130 640 117 615 122 568C130 495 170 457 220 434C250 422 285 421 298 425L327 444" />
      </g>
      <g transform="translate(400 580) scale(.35714 .33333)">
        <path d="M1118 390L1090 388C1040 378 1000 375 955 371C920 375 880 374 845 375C800 382 750 385 715 382M712 390L708 383C690 375 660 372 600 382C540 392 480 440 440 468C390 515 345 575 332 620C320 680 325 740 345 800C365 850 378 890 372 925C370 950 360 962 353 961C338 955 334 940 342 923M382 904L372 935L368 952" />
        <path d="M455 693C465 703 490 705 520 707L665 720L788 725" />
        <path d="M528 728C518 717 500 728 499 742C500 757 512 758 524 748C535 735 545 722 560 727C570 737 560 750 545 751C533 750 530 740 528 728" />
        <path d="M506 812C508 790 502 778 493 782C480 798 492 830 498 870C505 910 512 950 509 985C503 1015 485 1022 467 1016" />
        <path d="M413 1070L450 1060M558 1035C556 1050 540 1075 520 1090C505 1096 490 1080 490 1062C495 1046 520 1045 535 1056L561 1065L557 1035" />
        <path d="M669 834L655 825C645 860 645 900 652 925L665 937" />
        <path d="M703 872L716 870C722 890 712 925 686 935M738 868C728 878 714 888 712 895C716 890 726 893 730 914L748 915M785 893L813 897" />
        <path d="M853 963L847 880L850 873C858 890 862 903 868 903C875 895 880 880 884 868L886 905L893 930M890 832C920 850 935 890 914 947" />
        <path d="M930 785C935 765 955 752 963 765C965 785 950 805 935 820L965 815L1000 797" />
        <path d="M1053 815C1040 830 1045 880 1046 930C1046 970 1041 980 1033 978C1020 972 1020 940 1030 925L1078 868M1022 865L1068 868" />
        <path d="M1106 813C1085 828 1070 890 1103 915M1118 860L1132 855C1142 870 1134 886 1117 888M1155 850C1146 862 1134 868 1136 876C1150 874 1146 905 1172 908M1163 818C1192 840 1187 868 1168 880" />
        <path d="M1243 868C1222 862 1206 880 1210 906C1228 908 1245 885 1256 850L1250 805C1255 850 1260 890 1270 910M1262 878C1278 858 1292 855 1296 872C1294 890 1284 898 1276 896M1318 848C1304 864 1294 878 1298 896C1302 908 1312 908 1347 908" />
      </g>
    </Ink>
  );
}

function SharedBrowser() {
  return (
    <Browser>
      <BrowserTabs>
        <PdfDoc $ml={13}>PDF</PdfDoc>
        <FadeText>
          <Fit w={128}>*Probability, statistics, and rando</Fit>
        </FadeText>
        <Item $ml={7}>
          <Glyph s={7} vb={8} sw={1.500}>
            <path d="M1 1l6 6M7 1 1 7" />
          </Glyph>
        </Item>
        <Sep $ml={8} $h={14} $c="#8f8f8f" />
        <PdfDoc $ml={7}>PDF</PdfDoc>
        <Item $ml={7}>*p</Item>
        <Caps c="#555" mt={6} mr={0} w={34} s={9} />
      </BrowserTabs>
      <AddressRow>
        <Item $ml={14} $w={14}>
          <Glyph s={13} vb={14} sw={1.100} color="#c4c4c6">
            <path d="M13.500 7H1M6.500 1.500 1 7l5.500 5.500" />
          </Glyph>
        </Item>
        <Item $ml={19} $w={14}>
          <Glyph s={13} vb={14} sw={1.100} color="#c4c4c6">
            <path d="M.5 7H13M7.500 1.500 13 7l-5.500 5.500" />
          </Glyph>
        </Item>
        <Item $ml={18} $w={14}>
          <Glyph s={13} vb={14} sw={1.300} color="#333">
            <path d="M12.600 8A5.800 5.800 0 1 1 11 2.700L12.500 4M12.700.8V4.200H9.300" />
          </Glyph>
        </Item>
        <AddressBox>
          <Item $ml={10}>
            <Glyph s={12} vb={12} sw={1} color="#777">
              <circle cx="6" cy="6" r="5.400" />
              <path d="M6 5.400V9M6 3.200v.2" />
            </Glyph>
          </Item>
          <Item $ml={6} $w={26} $left>
            <Muted>
              <Fit w={18}>File</Fit>
            </Muted>
          </Item>
          <Sep $ml={0} $h={12} $c="#888" />
          <Item $ml={9} $w={586} $left>
            <Fit w={574}>C:/Users/nguye/Dropbox/nltrung/Teaching/ELT6056%20(Random%20Processes)/2020-2021/chap%203/rv.pdf</Fit>
          </Item>
          <Item $ml={4}>
            <Glyph s={12} sw={1.200} color="#777">
              <circle cx="6.500" cy="6.500" r="5.500" />
              <path d="M4 6.500h5M6.500 4v5M10.500 10.500 15 15" />
            </Glyph>
          </Item>
          <Item $ml={16}>
            <Glyph s={13} sw={1.300} color="#666">
              <path d="m7.500 1 2 4.300 4.800.5-3.500 3M7.500 1l-2 4.300-4.800.5 3.600 3.200-1 4.800 3-1.700" />
              <circle cx="11.500" cy="11.800" r="4" fill="#555" stroke="none" />
              <path d="M9.700 11.800h3.600M11.500 10v3.600" stroke="#fff" />
            </Glyph>
          </Item>
        </AddressBox>
        <Item $ml={15}>
          <Glyph s={13} sw={1.300} color="#333">
            <path d="m8 4.500-1.500-3.500-2 4.300-4 .5L4 9l-1 4.800L6.500 12M9 5.500h6.500M10 9h5.500M9 12.500h6.500" />
          </Glyph>
        </Item>
        <Item $ml={20}>
          <Glyph s={13} sw={1.300} color="#333">
            <rect x="5" y="4.500" width="10.500" height="10.500" rx="2.500" />
            <path d="M3.500 12Q1 12 1 9V3.500Q1 1 3.500 1H9q2.500 0 3 1.500M10.200 7.200v5.300M7.500 9.800h5.400" />
          </Glyph>
        </Item>
        <Item $ml={18}>
          <Glyph s={17} vb={16}>
            <circle cx="8" cy="8" r="8" fill="#cfcdcd" stroke="none" />
            <circle cx="8" cy="6" r="2.800" fill="#858282" stroke="none" />
            <path d="M3 12q0-2.500 2.500-2.500h5Q13 9.500 13 12q-2 2.500-5 2.500T3 12z" fill="#858282" stroke="none" />
          </Glyph>
        </Item>
        <Item $ml={20}>
          <DotsIcon s={12} />
        </Item>
      </AddressRow>
      <PdfTools>
        <PageBox>7</PageBox>
        <Item $ml={7} $w={27} $left>
          <Fit w={20}>of 42</Fit>
        </Item>
        <Item $ml={8}>
          <Glyph s={11} sw={1.500}>
            <circle cx="6.500" cy="6.500" r="5.500" />
            <path d="m10.500 10.500 5 5" />
          </Glyph>
        </Item>
        <Item $ml={150}>
          <Glyph s={11} vb={11} sw={1.100}>
            <path d="M.5 5.500h10" />
          </Glyph>
        </Item>
        <Item $ml={19}>
          <Glyph s={11} vb={11} sw={1.100}>
            <path d="M.5 5.500h10M5.500.5v10" />
          </Glyph>
        </Item>
        <Item $ml={18}>
          <Glyph s={13} sw={1.300}>
            <path d="M1 7.500A7 6.500 0 1 1 12.500 12l-2.500 2.500M14.500 15H9.500v-4M1 7.500l-.5-3" />
            <circle cx="7.500" cy="8" r="1.200" />
          </Glyph>
        </Item>
        <Item $ml={17}>
          <Glyph s={13} sw={1.300}>
            <rect x=".8" y="2.500" width="14.400" height="11.500" rx="1.500" />
            <path d="M3.500 8h3.500M9 8h3.500M5 6.500 3.500 8 5 9.500M11 6.500 12.500 8 11 9.500" />
          </Glyph>
        </Item>
        <Sep $ml={11} $h={11} $c="#b5b5b5" />
        <Item $ml={14}>
          <Glyph s={13} sw={1.400}>
            <path d="M7 2H11.500L15 5.500V14H7zM11 2v4h4" />
            <path d="M4.500 2H1.500V14H4.500" strokeDasharray="2.500 1.800" />
          </Glyph>
        </Item>
        <Item $ml={8} $w={70} $left>
          <Fit w={46}>Page view</Fit>
        </Item>
        <Item $ml={6} $w={13} $left>
          <Pale>A⁾</Pale>
        </Item>
        <Item $ml={6} $w={63} $left>
          <Pale>
            <Fit w={50}>Read aloud</Fit>
          </Pale>
        </Item>
        <Sep $ml={1} $h={11} $c="#b5b5b5" />
        <DrawTool>
          <Glyph s={12} sw={1.500}>
            <path d="M3 1 8 14l5-13" stroke="#4663c4" />
            <path d="M3 1l3 7h4l3-7" />
          </Glyph>
          <Item $ml={10} $w={31} $left>
            <Fit w={23}>Draw</Fit>
          </Item>
          <Item $ml={6}>
            <ChevronDown s={6} sw={1.500} />
          </Item>
        </DrawTool>
        <Item $ml={12}>
          <Glyph s={11} sw={1.600}>
            <path d="M2 1v4.500h11V1M4 6v4h7V6M5 10v5l5-3V10" />
          </Glyph>
        </Item>
        <Item $ml={9} $w={57} $left>
          <Fit w={43}>Highlight</Fit>
        </Item>
        <ChevronDown s={6} sw={1.500} />
        <Item $ml={20}>
          <Glyph s={13} sw={1.300}>
            <path d="M1 10.500 9.500 1.500 15 6.500 7 15H5zM4 7.500l5.500 5M5 15h5" />
          </Glyph>
        </Item>
        <Item $ml={8} $w={37} $left>
          <Fit w={24}>Erase</Fit>
        </Item>
        <Sep $ml={0} $h={11} $c="#b5b5b5" />
        <Item $ml={12}>
          <Glyph s={13} sw={1.400}>
            <path d="M4 4V1.500h8V4M3.500 12H1V6q0-2 2-2h10q2 0 2 2v6h-2.500M4 8.500h8V15H4z" />
          </Glyph>
        </Item>
        <Item $ml={17}>
          <Glyph s={12} sw={1.500}>
            <path d="M1 1h11.500L15 3.500V15H1zM4 1v4.500h7V1M4 15V9.500h8V15" />
          </Glyph>
        </Item>
        <Item $ml={17}>
          <Glyph s={12} sw={1.500}>
            <path d="M8 15H1V1h11.500L15 3.500V6M4 1v4.500h7V1M4 15V9.500h4" />
            <path d="m8.500 14.500 6-6" strokeWidth="3" />
          </Glyph>
        </Item>
        <Sep $ml={12} $h={11} $c="#b5b5b5" />
        <PinBox>
          <Glyph s={13} color="#222">
            <path d="m10 1 5 5-4 2-.5 4L4 5.500 8.500 5zM1.500 14.500 6 9l1.200 1.200z" fill="currentColor" />
          </Glyph>
        </PinBox>
      </PdfTools>
      <Body>
        <Paper>
          <Slide>
            <ClipRow>
              <Tok $w={20}>(</Tok>
              <Tok $w={20} $fs={34}>
                −
              </Tok>
              <Tok $w={25} $fs={34} $up={3}>
                ∞
              </Tok>
            </ClipRow>
            <Row $h={40} $mt={1} $fs={34} $pl={70} $sans $bold>
              <Fit w={136}>Variance</Fit>
            </Row>
            <Row $h={44} $mt={1} $pl={405} $fs={37}>
              <Tok $w={24} $i>σ</Tok>
              <Tok $w={11} $fs={25} $up={22}>2</Tok>
              <Tok $w={50} $fs={42}>=</Tok>
              <Tok $w={54} $b>
                <Fit w={53}>var</Fit>
              </Tok>
              <Tok $w={10} $fs={39}>[</Tok>
              <Tok $w={33} $i>X</Tok>
              <Tok $w={7} $fs={39}>]</Tok>
              <Tok $w={50} $fs={42}>=</Tok>
              <Tok $w={24} $b>E</Tok>
              <Tok $w={14} $fs={39}>[</Tok>
              <Tok $w={8} $fs={39}>(</Tok>
              <Tok $w={34} $i>X</Tok>
              <Tok $w={42} $fs={42}>−</Tok>
              <Tok $w={22} $i>μ</Tok>
              <Tok $w={11} $fs={39}>)</Tok>
              <Tok $w={17} $fs={25} $up={22}>2</Tok>
              <Tok $w={8} $fs={39}>]</Tok>
            </Row>
            <Row $h={40} $mt={33} $fs={34} $pl={69} $sans $bold>
              <Tok $w={20} $i $fs={38}>
                <MathN>n</MathN>
              </Tok>
              <Tok $w={21} $fs={23} $up={19}>
                <Regular>th</Regular>
              </Tok>
              <Item $ml={16}>
                <Fit w={134}>Moment</Fit>
              </Item>
            </Row>
            <Row $h={44} $mt={0} $pl={570} $fs={37}>
              <Tok $w={25} $b>E</Tok>
              <Tok $w={10} $fs={39}>[</Tok>
              <Tok $w={30} $i>X</Tok>
              <Tok $w={18} $fs={27} $i $up={18}>n</Tok>
              <Tok $w={9} $fs={39}>]</Tok>
            </Row>
            <Row $h={24} $mt={93} $pl={70} $fs={20} $sans>
              <Fit w={151}>Random Variables</Fit>
            </Row>
            <SlideInk />
          </Slide>
          <PageShade />
          <NextSlide />
        </Paper>
        <SideScroll>
          <Tri $d="up" />
          <SideThumb />
          <Tri $d="down" />
        </SideScroll>
      </Body>
      <BottomScroll>
        <Tri $d="left" />
        <BottomThumb />
        <Tri $d="right" />
      </BottomScroll>
      <LightBar>
        <Item $ml={12}>
          <WinLogo c="#111" s={12} />
        </Item>
        <Item $ml={2}>
          <SearchBox>
            <Glyph s={13} sw={1.300}>
              <circle cx="10" cy="6" r="4.700" />
              <path d="m6.500 9.500-5 6" />
            </Glyph>
            <Fit w={98}>Type here to search</Fit>
          </SearchBox>
        </Item>
        <LightTask $w={36}>
          <Glyph s={12} vb={12} sw={1.600}>
            <circle cx="6" cy="6" r="5" />
          </Glyph>
        </LightTask>
        <LightTask $w={36}>
          <Glyph s={12} vb={12} sw={1}>
            <path d="M.5.5v1.500h7V.5M.5 4h7v4h-7zM.5 11.500V10h7v1.500M11 .5v11M10.300 4h1.400" />
          </Glyph>
        </LightTask>
        <LightTask $w={30} $ml={5} $run>
          <FolderIcon s={15} />
        </LightTask>
        <LightTask $w={36} $ml={4} $on $run>
          <Glyph s={17}>
            <circle cx="8" cy="8" r="8" fill="#1467b8" stroke="none" />
            <path d="M0 8Q1 0 8.500 0 16 .8 16 7q0 4-4.500 4-2.500 0-1.500-2 .8-3.500-3-3.800Q2 5 0 8z" fill="#3bc4b0" stroke="none" />
            <path d="M6 8.500Q6 14 12 14.200q1 0 2-.7" stroke="#0d4f91" strokeWidth="1.400" />
          </Glyph>
        </LightTask>
        <LightTask $w={36} $ml={1}>
          <LetterTile>L</LetterTile>
        </LightTask>
        <LightTask $w={38}>
          <Badged>
            <Glyph s={17}>
              <path d="M0 6 8 0l8 6v9H0z" fill="#0f62b3" stroke="none" />
              <path d="M2 5h12v4l-6 4-6-4z" fill="#f4f7fa" stroke="none" />
              <path d="M0 6l8 6 8-6v9.500H0z" fill="#2d9be8" stroke="none" />
            </Glyph>
            <Badge>3</Badge>
          </Badged>
        </LightTask>
        <LightTask $w={30} $ml={4} $run>
          <Glyph s={17}>
            <rect width="16" height="16" rx="3" fill="#7d67e8" stroke="none" />
            <path d="M5 2.500h6q3 0 3 4.500t-3 4.500H8.500L6 14v-2.800Q2 11 2 7t3-4.500z" fill="#fff" stroke="none" />
            <path d="M5.500 4.500q.5 3.500 4.500 5" stroke="#7d67e8" />
          </Glyph>
        </LightTask>
        <LightTask $w={30} $ml={7} $run>
          <Badged>
            <TeamsIcon s={17} />
            <StopDot>
              <i />
            </StopDot>
          </Badged>
        </LightTask>
        <LightTask $w={30} $ml={7} $run>
          <Glyph s={17}>
            <rect width="16" height="16" rx="1.500" fill="#1466d8" stroke="none" />
            <path d="m4 8 3 4 6-9" stroke="#fff" strokeWidth="2" />
            <path d="m12 5 3-5" stroke="#222" strokeWidth="2" />
          </Glyph>
        </LightTask>
        <LightTask $w={30} $ml={7} $run>
          <Glyph s={17}>
            <path d="M5 10Q1 4 6 1.500q7-2 7 3.500 0 4-4 7" stroke="#d9481c" strokeWidth="2.200" />
            <path d="M6 4l4 8M11 4l-4 8" stroke="#888" />
            <circle cx="6" cy="13.500" r="1.800" stroke="#2d8bdc" />
            <circle cx="11" cy="13.500" r="1.800" stroke="#2d8bdc" />
          </Glyph>
        </LightTask>
        <Item $ml={58}>
          <Glyph s={9} vb={10} sw={1.300}>
            <path d="m1 7 4-4 4 4" />
          </Glyph>
        </Item>
        <Item $ml={12}>
          <Glyph s={14} vb={14}>
            <path d="M4.500.5h5v9h-5zM5.500 10h3v3h-3z" fill="#222" stroke="none" />
          </Glyph>
        </Item>
        <Item $ml={11}>
          <SoundIcon s={13} c="#555" />
        </Item>
        <Item $ml={10}>
          <Glyph s={13}>
            <path d="m4.500 1 3.500 2.300L4.500 5.700 1 3.300zM11.500 1 15 3.300l-3.500 2.400L8 3.300zM4.500 6 8 8.300l-3.500 2.400L1 8.300zM11.500 6 15 8.300l-3.500 2.400L8 8.300zM8 9.500l3.500 2.400L8 14.300l-3.500-2.400z" fill="#111" stroke="none" />
          </Glyph>
        </Item>
        <Item $ml={14}>
          <Glyph s={12} sw={1.200}>
            <path d="m5 10 7-9 2 2-7 8.500zM5 10q-5 0-4 3.500t5 1 2.500-5.500" />
          </Glyph>
        </Item>
        <Item $ml={14}>
          <SmallText>
            <Fit w={17}>ENG</Fit>
          </SmallText>
        </Item>
        <Clock>
          <Fit w={32}>8:40 PM</Fit>
          <Fit w={41}>2/25/2021</Fit>
        </Clock>
        <Item $ml={13}>
          <Glyph s={13}>
            <path d="M1 1h13v10.500H9L6.500 14v-2.500H1z" fill="#111" stroke="none" />
            <path d="M3.500 4h8M3.500 6.300h8M3.500 8.600h8" stroke="#e5e5f0" />
            <circle cx="13" cy="13" r="3" fill="#333" stroke="none" />
          </Glyph>
        </Item>
      </LightBar>
      <Strip $x={216} $y={0} $w={520} $h={36} $pl={16} $pt={0} $fs={10.5}>
        <Item $w={177} $left>
          <Fit w={52}>Presenting...</Fit>
        </Item>
        <StripBox $drop $w={150} $h={25} $ml={0}>
          <Fit w={52}>Give control</Fit>
          <ChevronDown s={10} sw={1} />
        </StripBox>
        <StripBox $w={24} $h={24} $ml={6}>
          <NoScreenIcon s={13} />
        </StripBox>
        <StripBox $w={108} $h={24} $ml={6}>
          <Fit w={69}>Stop presenting</Fit>
        </StripBox>
        <Item $ml={16}>
          <PinIcon s={10} />
        </Item>
      </Strip>
      <Tip $x={515} $y={46} $w={158} $h={19} $fs={10} $lh={18}>
        <Fit w={146}>Only give control to people you trust</Fit>
      </Tip>
    </Browser>
  );
}

const MathN = styled.span`
  font-family: ${serif};
  font-weight: 400;
`;
const Regular = styled.span`
  font-weight: 400;
`;
const SmallText = styled.span`
  font-size: 10.5px;
`;

/* ---------- book pages ---------- */

const Pages = styled.div`
  flex: none;
  width: 797px;
  margin-left: 146px;
  display: flex;
  flex-direction: column;
  gap: 4px;
  color: #111;
`;

const PageAbove = styled.div`
  flex: none;
  height: 164px;
  padding-left: 185px;
  background: #fff;
  font-family: ${humanist};
`;

const PageBelow = styled.div`
  flex: none;
  height: 594px;
  padding: 56px 0 0 121px;
  display: flex;
  flex-direction: column;
  background: #fff;
  overflow: hidden;
  font: 16.8px/20px ${serif};
`;

const Axis = styled.svg`
  display: block;
  width: 490px;
  height: 12px;
  stroke: #222;
  fill: none;
`;

const AxisLabels = styled.div`
  display: flex;
  height: 16px;
  align-items: center;
  font: 13px/14px ${serif};
`;

const FigureTitle = styled.div`
  margin-top: 18px;
  height: 17px;
  font-size: 12.5px;
  line-height: 17px;
  font-weight: 700;
`;

const FigureText = styled.div`
  height: 17px;
  font-size: 13px;
  line-height: 17px;
`;

const RunningHead = styled.div`
  flex: none;
  width: 620px;
  height: 20px;
  display: flex;
  justify-content: flex-end;
  font: 14px/20px ${humanist};
`;

const Line = styled.div`
  flex: none;
  height: ${(p) => p.$h || 20}px;
  line-height: ${(p) => p.$h || 20}px;
  margin-top: ${(p) => p.$mt || 0}px;
  padding-left: ${(p) => p.$pl || 0}px;
  white-space: nowrap;
  sub {
    font-size: 12px;
    line-height: 0;
    vertical-align: -3.5px;
  }
`;

const Rule = styled.div`
  flex: none;
  width: 620px;
  height: 2px;
  margin-top: 5px;
  background: #1a1a1a;
`;

const Heading = styled.div`
  flex: none;
  height: 20px;
  margin: 40px 0 11px -60px;
  display: flex;
  font: bold 15px/20px ${humanist};
`;

const Formula = styled.div`
  flex: none;
  height: 44px;
  margin-top: ${(p) => p.$mt}px;
  padding-left: ${(p) => p.$pl}px;
  display: flex;
  align-items: center;
  sub {
    font-size: 12px;
    line-height: 0;
    vertical-align: -3.5px;
  }
`;

const Frac = styled.div`
  flex: none;
  width: 52px;
  display: flex;
  flex-direction: column;
  align-items: center;
  margin: 3px 0 0 ${(p) => p.$ml}px;
`;

const Num = styled.div`
  height: 20px;
  line-height: 17px;
`;

const Den = styled.div`
  width: 52px;
  height: 20px;
  padding-top: 3px;
  display: flex;
  border-top: 1px solid #333;
`;

const Radicand = styled.div`
  width: 36px;
  height: 18px;
  line-height: 18px;
  border-top: 1px solid #333;
  sup {
    font-size: 10.5px;
    line-height: 0;
    vertical-align: 6px;
  }
`;

const Exp = styled.span`
  display: block;
  padding-bottom: 8px;
  font-size: 12.5px;
  line-height: 14px;
  sup {
    font-size: 8.5px;
    line-height: 0;
    vertical-align: 4px;
  }
`;

const Sigma = styled.div`
  width: 20px;
  margin-left: ${(p) => p.$ml}px;
  padding-top: 13px;
  display: flex;
  flex-direction: column;
  align-items: center;
  line-height: 12px;
  span {
    font-size: 25px;
    line-height: 22px;
  }
  i {
    font-size: 12px;
  }
`;

const BigArrow = styled.span`
  font-size: 20px;
  line-height: 0;
`;

/* inline mathematics is set a little wider than the prose around it */
const M = styled.span`
  letter-spacing: 0.9px;
`;

const SqrtFrac = ({ ml }) => (
  <Frac $ml={ml}>
    <Num>1</Num>
    <Den>
      <Svg width="15" height="19" viewBox="0 0 15 19" $sw={1}>
        <path d="m3 10 2-1 4.500 9L14.500.5h1.500" />
      </Svg>
      <Radicand>
        <Fit w={35}>
          2<i>πσ</i>
          <sup>2</sup>
        </Fit>
      </Radicand>
    </Den>
  </Frac>
);

const Power = ({ op, w }) => (
  <Exp>
    <Fit w={w}>
      −(<i>x</i>
      {op}
      <i>v</i>)<sup>2</sup>/2<i>σ</i>
      <sup>2</sup>
    </Fit>
  </Exp>
);

const BOTTOM_TABS = [
  ["Tutorial_isssp...", 82],
  ["LuananAll.pdf", 74],
  ["jec_2012cr.pdf", 79],
  ["iosart2c.pdf", 63],
  ["Bài-tập-Latex....", 84],
  ["Probability, st...", 83],
  ["W1.pdf", 39],
];

/* an operator set off by fixed spaces, so that justification leaves it alone */
const Op = ({ children }) => (
  <>
    {"\u2002"}
    {children}
    {"\u2002"}
  </>
);

const Sub = ({ children }) => (
  <sub>
    <i>{children}</i>
  </sub>
);

function Book() {
  return (
    <Pages>
      <PageAbove>
        <Axis viewBox="0 0 490 12">
          <path d="M0 4.500h460M130.500 0v10M213.500 0v10M296.500 0v10" strokeWidth="1.300" />
          <path d="M458 1.500l9 3-9 3z" fill="#222" stroke="none" />
          <path d="M3 3.500Q12 3 18 0M148 3.500h10M163 3q8-.5 20-3M244 0q10 3.500 22 3.500h20M413 0l6 1.500M422 2.800l6 1" strokeWidth="1.500" />
          <text x="473" y="8" fill="#222" stroke="none" fontFamily="Liberation Serif, serif" fontSize="13" fontStyle="italic">
            x
          </text>
        </Axis>
        <AxisLabels>
          <Item $ml={113} $w={36}>
            −<i>v</i>
          </Item>
          <Item $ml={54} $w={20}>
            0
          </Item>
          <Item $ml={63} $w={20}>
            <i>v</i>
          </Item>
        </AxisLabels>
        <FigureTitle>
          <Fit w={62}>FIGURE 4.5</Fit>
        </FigureTitle>
        <FigureText>
          <Fit w={224}>The conditional pdfs given the input signal</Fit>
        </FigureText>
      </PageAbove>
      <PageBelow>
        <RunningHead>
          <Fit w={67}>Section 4.3</Fit>
          <Item $ml={15}>
            <Fit w={143}>
              The Expected Value of <i>X</i>
            </Fit>
          </Item>
          <Item $ml={23}>
            <b>
              <Fit w={24}>155</Fit>
            </b>
          </Item>
        </RunningHead>
        <Line $mt={19}>
          <Fit w={24}>and</Fit>
        </Line>
        <Formula $mt={0} $pl={163}>
          <Fit w={147}>
            <i>f</i>
            <Sub>Y</Sub>(<i>x</i>|<i>B</i>
            <sub>1</sub>) = <i>f</i>
            <Sub>N</Sub>(<i>x</i> − <i>v</i>)
          </Fit>
          <Item $ml={6}>=</Item>
          <SqrtFrac ml={7} />
          <i>e</i>
          <Power op="−" w={60} />.
        </Formula>
        <Line $mt={9.5} $pl={40}>
          <Fit w={257}>
            The pdf of the received signal <i>Y</i> is then:
          </Fit>
        </Line>
        <Formula $mt={6} $pl={117}>
          <Fit w={36}>
            <i>f</i>
            <Sub>Y</Sub>(<i>x</i>)
          </Fit>
          <Item $ml={6}>=</Item>
          <SqrtFrac ml={7} />
          <i>e</i>
          <Power op="+" w={60} />
          <Fit w={68}>
            (1 − <i>p</i>) +
          </Fit>
          <SqrtFrac ml={7} />
          <i>e</i>
          <Power op="−" w={61} />
          <i>p</i>.
        </Formula>
        <Line $h={18.5} $mt={8}>
          <Fit w={620}>
            Figure 4.5 shows the two conditional pdfs. We can see that the transmitted signal <i>X</i> shifts the cen-
          </Fit>
        </Line>
        <Line $h={18.5}>
          <Fit w={204}>ter of mass of the Gaussian pdf.</Fit>
        </Line>
        <Rule />
        <Heading>
          <Item $w={60} $left>
            <Fit w={21}>4.3</Fit>
          </Item>
          <Fit w={192}>
            THE EXPECTED VALUE OF <i>X</i>
          </Fit>
        </Heading>
        <Line>
          <Fit w={620} words>
            We discussed the expected value for discrete random variables in Section 3.3, and found
          </Fit>
        </Line>
        <Line>
          <Fit w={620} words>
            that the sample mean of independent observations of a random variable approaches
          </Fit>
        </Line>
        <Line>
          <Fit w={620} words>
            <M>
              <i>E</i>[<i>X</i>]
            </M>
            . Suppose we perform a series of such experiments for continuous random vari-
          </Fit>
        </Line>
        <Line>
          <Fit w={620} words>
            ables. Since continuous random variables have{" "}
            <M>
              <i>P</i>[<i>X</i>
              <Op>=</Op>
              <i>x</i>]
            </M>
            <Op>=</Op>0 for any specific value
          </Fit>
        </Line>
        <Line>
          <Fit w={620} words>
            of <i>x</i>, we divide the real line into small intervals and count the number of times{" "}
            <M>
              <i>N</i>
              <Sub>k</Sub>(<i>n</i>)
            </M>
          </Fit>
        </Line>
        <Line>
          <Fit w={620} words>
            the observations fall in the interval{" "}
            <M>
              {"{"}
              <i>x</i>
              <Sub>k</Sub>
              <Op>&lt;</Op>
              <i>X</i>
              <Op>&lt;</Op>
              <i>x</i>
              <Sub>k</Sub>
              <Op>+</Op>Δ{"}"}
            </M>
            . As <i>n</i> becomes large, then the
          </Fit>
        </Line>
        <Line>
          <Fit w={620} words>
            relative frequency{" "}
            <M>
              <i>f</i>
              <Sub>k</Sub>(<i>n</i>)<Op>=</Op>
              <i>N</i>
              <Sub>k</Sub>(<i>n</i>)/<i>n</i>
            </M>{" "}
            will approach{" "}
            <M>
              <i>f</i>
              <Sub>X</Sub>(<i>x</i>
              <Sub>k</Sub>)Δ
            </M>
            , the probability of the inter-
          </Fit>
        </Line>
        <Line>
          <Fit w={620} words>
            val. We calculate the sample mean in terms of the relative frequencies and let <i>n</i> <BigArrow>→</BigArrow> ∞:
          </Fit>
        </Line>
        <Formula $mt={7} $pl={177}>
          <Fit w={36}>
            ⟨<i>X</i>⟩<Sub>n</Sub>
          </Fit>
          <Item $ml={6}>=</Item>
          <Sigma $ml={9}>
            <span>Σ</span>
            <i>k</i>
          </Sigma>
          <Fit w={53}>
            <i>x</i>
            <Sub>k</Sub>
            <i>f</i>
            <Sub>k</Sub>(<i>n</i>)
          </Fit>
          <Item $ml={4} $w={20}>
            <BigArrow>→</BigArrow>
          </Item>
          <Sigma $ml={5}>
            <span>Σ</span>
            <i>k</i>
          </Sigma>
          <Fit w={85}>
            <i>x</i>
            <Sub>k</Sub>
            <i>f</i>
            <Sub>X</Sub>(<i>x</i>
            <Sub>k</Sub>)Δ.
          </Fit>
        </Formula>
        <Line $mt={13}>
          <Fit w={568} words>
            The expression on the right-hand side approaches an integral as we decrease Δ.
          </Fit>
        </Line>
      </PageBelow>
    </Pages>
  );
}

function SecondDesktop() {
  return (
    <Desktop $h={856}>
      <DarkTaskbar time="8:40 PM" active={7} />
      <Split>
        <MeetingWindow>
          <MeetingHead time="02:39:13" dim />
          <Stage>
            <SharedBrowser />
          </Stage>
        </MeetingWindow>
        <Reader>
          <TabStrip $h={38} $pl={6}>
            <Burger $mr={6}>
              <i />
              <i />
              <i />
            </Burger>
            <Tabs items={BOTTOM_TABS} w={110.5} gap={1.600} bg="#218ade" on="#69b0ec" close="#14588f" active={5} />
            <Caps c="#111" mt={9} mr={1} w={45.5} max />
          </TabStrip>
          <ReaderTools page="154" count="(170 / 833)" pl={7} full />
          <Viewport>
            <Book />
            <ScrollTrack>
              <ScrollArrow />
              <Thumb $mt={190} />
            </ScrollTrack>
          </Viewport>
        </Reader>
      </Split>
    </Desktop>
  );
}

export default function App() {
  return (
    <Screen>
      <Global />
      <FirstDesktop />
      <SecondDesktop />
    </Screen>
  );
}
